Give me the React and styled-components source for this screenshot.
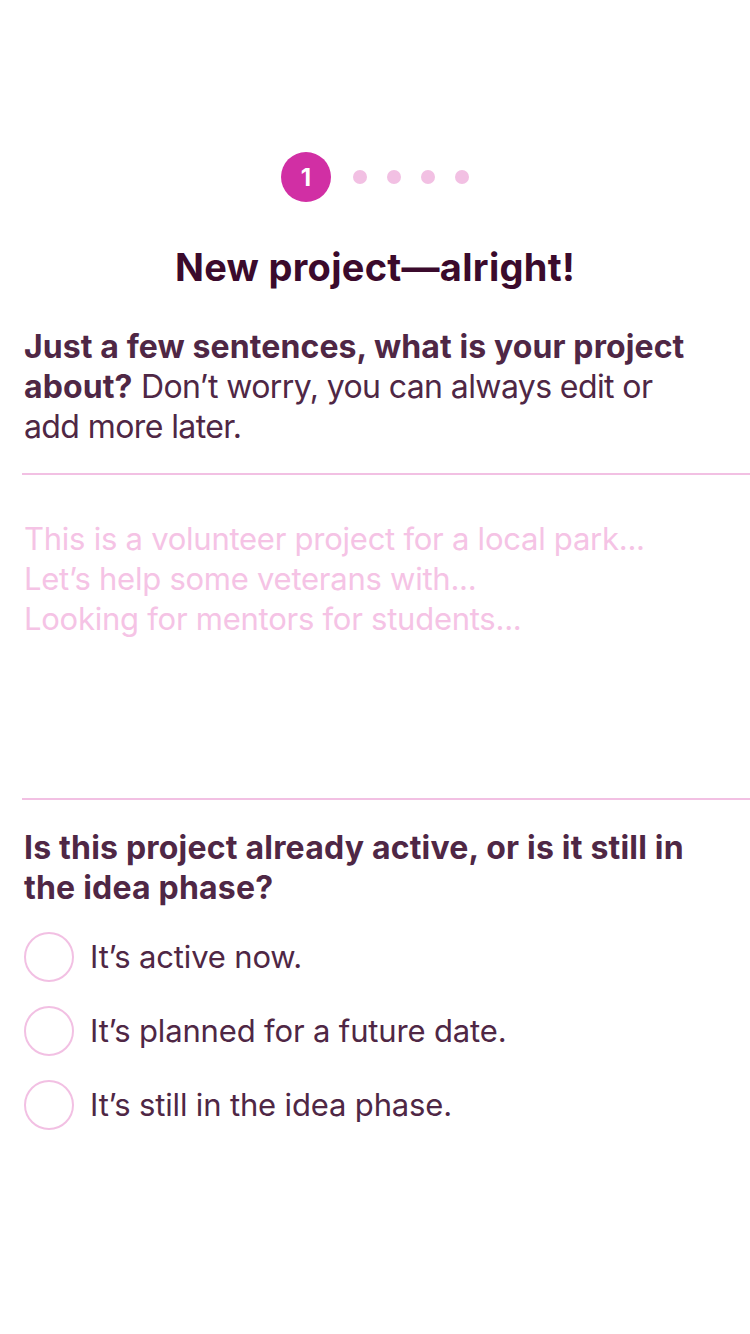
import React from "react";
import styled, { createGlobalStyle } from "styled-components";

const GlobalStyle = createGlobalStyle`
  * { box-sizing: border-box; }
  body {
    margin: 0;
    background: #ffffff;
    font-family: Inter, "Noto Sans", sans-serif;
  }
`;

const steps = [1, 2, 3, 4, 5];
const options = [
  "It’s active now.",
  "It’s planned for a future date.",
  "It’s still in the idea phase.",
];

export default function App() {
  return (
    <Page>
      <GlobalStyle />
      <Stepper>
        {steps.map((s, i) =>
          i === 0 ? <ActiveStep key={s}>{s}</ActiveStep> : <Dot key={s} />
        )}
      </Stepper>
      <Title>New project—alright!</Title>
      <Intro>
        <strong>Just a few sentences, what is your project about?</strong> Don’t
        worry, you can always edit or add more later.
      </Intro>
      <Description
        placeholder={
          "This is a volunteer project for a local park...\nLet’s help some veterans with...\nLooking for mentors for students..."
        }
      />
      <Question>Is this project already active, or is it still in the idea phase?</Question>
      <Options>
        {options.map((o) => (
          <Option key={o}>
            <Radio type="radio" name="phase" />
            {o}
          </Option>
        ))}
      </Options>
    </Page>
  );
}

const Page = styled.div`
  width: 750px;
  min-height: 1334px;
  padding: 152px 0 0 24px;
  color: #4f2745;
`;

const Stepper = styled.div`
  display: flex;
  align-items: center;
  justify-content: center;
  gap: 20px;
  margin-left: -24px;
`;

const ActiveStep = styled.div`
  width: 50px;
  height: 50px;
  border-radius: 50%;
  background: #d12fa4;
  color: #ffffff;
  display: flex;
  align-items: center;
  justify-content: center;
  font-weight: 700;
  font-size: 24px;
  margin-right: 2px;
`;

const Dot = styled.div`
  width: 14px;
  height: 14px;
  border-radius: 50%;
  background: #f2c0e3;
`;

const Title = styled.h1`
  margin: 42px 0 0 -24px;
  text-align: center;
  font-size: 38px;
  line-height: 46px;
  font-weight: 700;
  color: #3b0a2c;
  letter-spacing: 0.3px;
`;

const Intro = styled.p`
  width: 672px;
  margin: 37px 0 0;
  font-size: 32px;
  line-height: 40px;
  letter-spacing: -0.6px;
  strong { font-weight: 700; letter-spacing: 0.1px; }
`;

const Description = styled.textarea`
  display: block;
  width: 728px;
  height: 327px;
  margin: 26px 0 0 -2px;
  padding: 44px 0 0 2px;
  border: none;
  border-top: 2px solid #f2c0e3;
  border-bottom: 2px solid #f2c0e3;
  resize: none;
  outline: none;
  font-family: inherit;
  font-size: 31px;
  line-height: 40px;
  letter-spacing: -0.25px;
  color: #4f2745;
  &::placeholder { color: #f5c3e5; }
`;

const Question = styled.h2`
  margin: 28px 40px 0 0;
  font-size: 32px;
  line-height: 40px;
  font-weight: 700;
  letter-spacing: 0.2px;
`;

const Options = styled.div`
  display: flex;
  flex-direction: column;
  gap: 24px;
  margin-top: 24px;
`;

const Option = styled.label`
  display: flex;
  align-items: center;
  gap: 16px;
  font-size: 31px;
  line-height: 50px;
  letter-spacing: -0.15px;
`;

const Radio = styled.input`
  appearance: none;
  margin: 0;
  width: 50px;
  height: 50px;
  border-radius: 50%;
  border: 2px solid #f2c0e3;
  flex-shrink: 0;
`;
